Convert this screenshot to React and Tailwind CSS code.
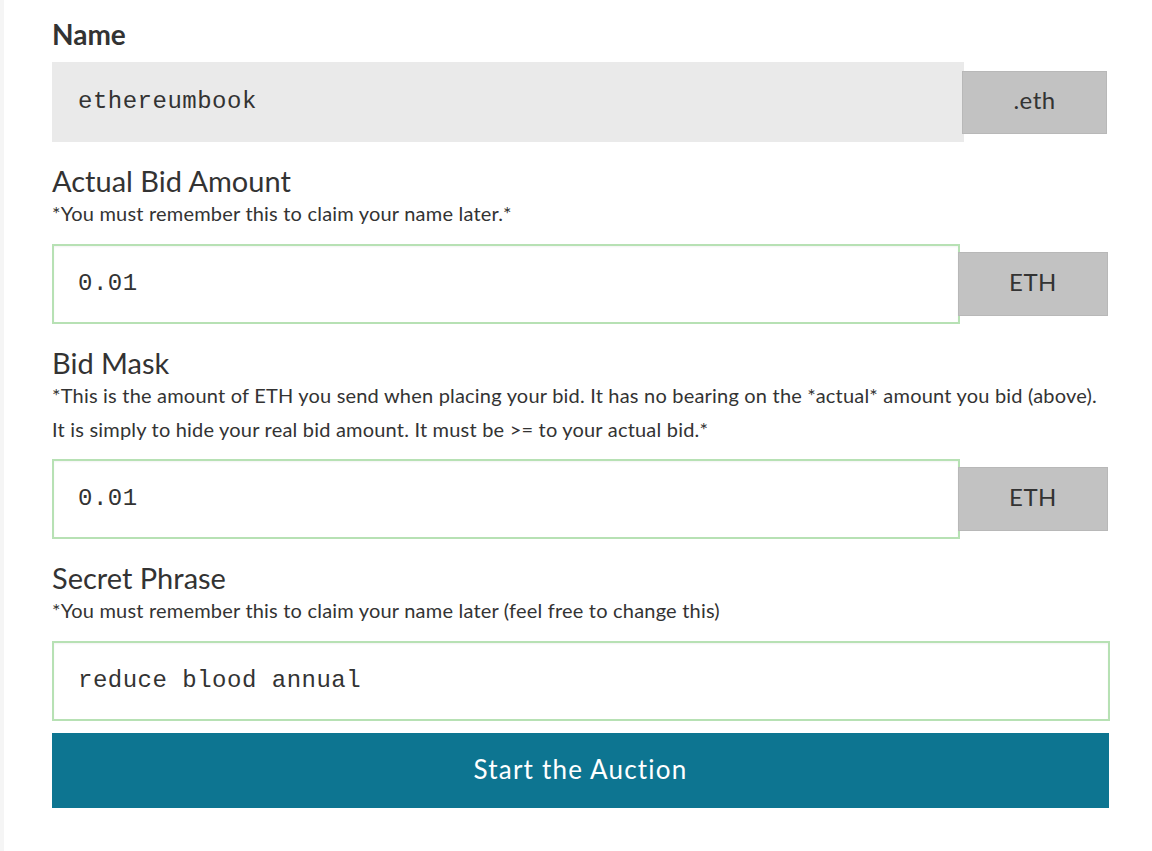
import React from 'react';

const lato = { fontFamily: 'Lato, "Open Sans", sans-serif' };

// Input row with optional suffix box
const InputRow = ({ value, suffix, inputW, boxW, boxH, readOnly }) => (
  <div className="flex items-center">
    <div
      className={
        readOnly
          ? `h-[80px] ${inputW} bg-[#eaeaea] flex items-center pl-[26px]`
          : `h-[80px] ${inputW} bg-white border-2 border-[#b7e1b4] shadow-[inset_0_1px_2px_rgba(0,0,0,0.05)] flex items-center pl-[24px]`
      }
    >
      <span className="text-[24px] tracking-[0.5px] text-[#333]" style={{ fontFamily: '"Liberation Mono", monospace' }}>
        {value}
      </span>
    </div>
    {suffix && (
      <div
        className={`${boxW} ${boxH} -ml-[2px] bg-[#c2c2c2] border border-[#b8b8b8] flex items-center justify-center pb-[4px] text-[24px] tracking-[0.5px] text-[#333]`}
        style={lato}
      >
        {suffix}
      </div>
    )}
  </div>
);

const Label = ({ children }) => (
  <div className="mt-[22px] text-[29px] leading-[34px] text-[#333]">{children}</div>
);

const Hint = ({ children }) => (
  <div className="-mt-[2px] text-[20px] tracking-[0.2px] leading-[34px] text-[#333]">{children}</div>
);

export default function App() {
  return (
    <div className="min-h-screen flex bg-white" style={lato}>
      <div className="w-[4px] bg-[#f5f5f5]" />
      <div className="pl-[48px] pt-[17px] w-[1106px]">
        <div className="text-[28px] leading-[34px] font-bold text-[#333]">Name</div>
        <div className="mt-[11px]">
          <InputRow value="ethereumbook" suffix=".eth" inputW="w-[912px]" boxW="w-[145px]" boxH="h-[63px]" readOnly />
        </div>

        <Label>Actual Bid Amount</Label>
        <Hint>*You must remember this to claim your name later.*</Hint>
        <div className="mt-[14px]">
          <InputRow value="0.01" suffix="ETH" inputW="w-[908px]" boxW="w-[150px]" boxH="h-[64px]" />
        </div>

        <Label>Bid Mask</Label>
        <Hint>
          *This is the amount of ETH you send when placing your bid. It has no bearing on the *actual* amount you bid (above).
          It is simply to hide your real bid amount. It must be &gt;= to your actual bid.*
        </Hint>
        <div className="mt-[13px]">
          <InputRow value="0.01" suffix="ETH" inputW="w-[908px]" boxW="w-[150px]" boxH="h-[64px]" />
        </div>

        <Label>Secret Phrase</Label>
        <Hint>*You must remember this to claim your name later (feel free to change this)</Hint>
        <div className="mt-[14px]">
          <InputRow value="reduce blood annual" inputW="w-[1058px]" />
        </div>

        <button className="mt-[12px] w-[1057px] h-[75px] pb-[2px] bg-[#0d7591] text-white text-[26px] tracking-[1.2px]" style={lato}>
          Start the Auction
        </button>
      </div>
    </div>
  );
}
